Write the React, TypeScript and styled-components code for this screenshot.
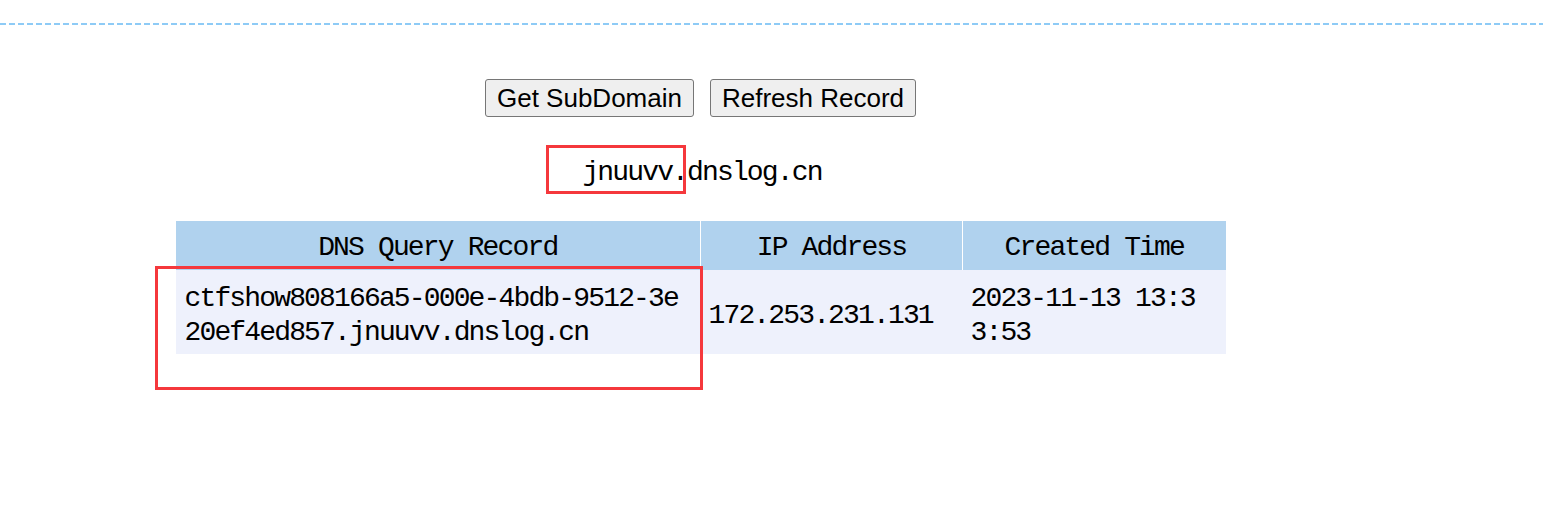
import React from "react";
import styled, { createGlobalStyle } from "styled-components";

const GlobalStyle = createGlobalStyle`
  html, body { margin: 0; padding: 0; background: #ffffff; }
  body { font-family: "Liberation Serif", serif; color: #000; }
`;

const Page = styled.div`
  position: relative;
  width: 1543px;
  height: 517px;
  overflow: hidden;
`;

const Divider = styled.div`
  margin-top: 23px;
  height: 2px;
  background: repeating-linear-gradient(to right, #8ecbf6 0 6px, transparent 6px 9px);
`;

const Main = styled.main`
  width: 1401px;
  display: flex;
  flex-direction: column;
  align-items: center;
`;

const ButtonRow = styled.div`
  margin-top: 54px;
  display: flex;
  gap: 16px;
`;

const Button = styled.button`
  height: 38px;
  padding: 0 11px;
  font-family: "Liberation Sans", Arial, sans-serif;
  font-size: 26px;
  line-height: 30px;
  color: #000;
  background: #efefef;
  border: 1px solid #767676;
  border-radius: 3px;
`;

const mono = `
  font-family: "Liberation Mono", "Courier New", monospace;
  font-size: 28px;
  letter-spacing: -1.85px;
  line-height: 34px;
`;

const Domain = styled.div`
  ${mono}
  margin-top: 39px;
  padding-left: 3px;
  white-space: pre;
`;

const Table = styled.table`
  margin-top: 31px;
  width: 1050px;
  border-collapse: collapse;
  table-layout: fixed;
`;

const Th = styled.th<{ $w: number; $first?: boolean }>`
  ${mono}
  width: ${(p) => p.$w}px;
  height: 49px;
  box-sizing: border-box;
  padding: 4px 0 0 0;
  font-weight: normal;
  text-align: center;
  background: #b0d2ee;
  border-left: ${(p) => (p.$first ? "none" : "1px solid #ffffff")};
`;

const Td = styled.td<{ $pl: number; $pr: number }>`
  ${mono}
  height: 84px;
  box-sizing: border-box;
  padding: 12px ${(p) => p.$pr}px 4px ${(p) => p.$pl}px;
  background: #eef1fc;
  vertical-align: middle;
  word-break: break-all;
  text-align: left;
`;

const Mark = styled.div<{ $x: number; $y: number; $w: number; $h: number }>`
  position: absolute;
  left: ${(p) => p.$x}px;
  top: ${(p) => p.$y}px;
  width: ${(p) => p.$w}px;
  height: ${(p) => p.$h}px;
  box-sizing: border-box;
  border: 3px solid #f5383c;
  pointer-events: none;
`;

export default function App() {
  return (
    <>
      <GlobalStyle />
      <Page>
        <Divider />
        <Main>
          <ButtonRow>
            <Button>Get SubDomain</Button>
            <Button>Refresh Record</Button>
          </ButtonRow>
          <Domain>jnuuvv.dnslog.cn</Domain>
          <Table>
            <thead>
              <tr>
                <Th $w={525} $first>DNS Query Record</Th>
                <Th $w={262}>IP Address</Th>
                <Th $w={263}>Created Time</Th>
              </tr>
            </thead>
            <tbody>
              <tr>
                <Td $pl={9} $pr={20}>ctfshow808166a5-000e-4bdb-9512-3e20ef4ed857.jnuuvv.dnslog.cn</Td>
                <Td $pl={8} $pr={8}>172.253.231.131</Td>
                <Td $pl={8} $pr={25}>2023-11-13 13:33:53</Td>
              </tr>
            </tbody>
          </Table>
        </Main>
        <Mark $x={546} $y={145} $w={140} $h={49} />
        <Mark $x={155} $y={266} $w={548} $h={124} />
      </Page>
    </>
  );
}
